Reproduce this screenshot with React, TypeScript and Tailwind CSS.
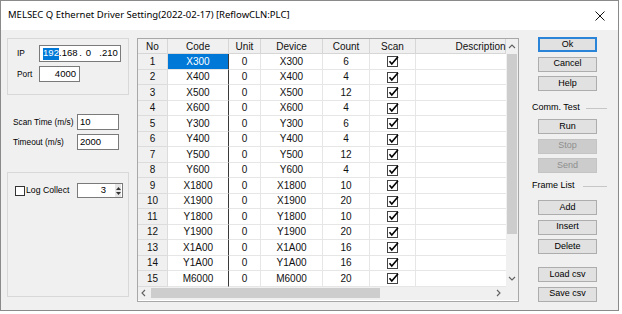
import React from "react";

const rows: [number, string, number, string, number][] = [
  [1, "X300", 0, "X300", 6],
  [2, "X400", 0, "X400", 4],
  [3, "X500", 0, "X500", 12],
  [4, "X600", 0, "X600", 4],
  [5, "Y300", 0, "Y300", 6],
  [6, "Y400", 0, "Y400", 4],
  [7, "Y500", 0, "Y500", 12],
  [8, "Y600", 0, "Y600", 4],
  [9, "X1800", 0, "X1800", 10],
  [10, "X1900", 0, "X1900", 20],
  [11, "Y1800", 0, "Y1800", 10],
  [12, "Y1900", 0, "Y1900", 20],
  [13, "X1A00", 0, "X1A00", 16],
  [14, "Y1A00", 0, "Y1A00", 16],
  [15, "M6000", 0, "M6000", 20],
];

function Check() {
  return (
    <svg width="12" height="12" viewBox="0 0 12 12">
      <rect x="0.5" y="1.5" width="10" height="10" fill="white" stroke="#444" />
      <path d="M2.5 6.2 L4.8 9 L11 1.8" stroke="#000" strokeWidth="1.6" fill="none" />
    </svg>
  );
}

function Btn({ label, primary, disabled }: { label: string; primary?: boolean; disabled?: boolean }) {
  if (disabled) {
    return (
      <div className="w-[59px] h-[15px] ml-[6px] bg-[#cccccc] border border-[#c4c4c4] text-[#8e8e8e] text-[9px] flex items-center justify-center">
        {label}
      </div>
    );
  }
  if (primary) {
    return (
      <div className="w-[59px] h-[15px] ml-[6px] bg-[#e1e1e1] border-2 border-[#2a84d8] text-black text-[9px] flex items-center justify-center">
        {label}
      </div>
    );
  }
  return (
    <div className="w-[59px] h-[15px] ml-[6px] bg-[#e1e1e1] border border-[#adadad] text-black text-[9px] flex items-center justify-center">
      {label}
    </div>
  );
}

function Chevron({ dir }: { dir: "up" | "down" | "left" | "right" }) {
  const d =
    dir === "up"
      ? "M1 5 L4 2 L7 5"
      : dir === "down"
      ? "M1 2 L4 5 L7 2"
      : dir === "left"
      ? "M5 1 L2 4 L5 7"
      : "M2 1 L5 4 L2 7";
  return (
    <svg width="8" height="8" viewBox="0 0 8 8">
      <path d={d} stroke="#606060" strokeWidth="1.1" fill="none" />
    </svg>
  );
}

export default function App() {
  const cols = ["w-[30px]", "w-[61px]", "w-[32px]", "w-[62px]", "w-[47px]", "w-[46px]", "w-[90px]"];
  return (
    <div className="w-[622px] h-[314px] bg-white font-['Liberation_Sans',Arial,sans-serif] text-black">
      <div className="w-[619px] h-[311px] border border-[#8a8a8a] bg-[#f0f0f0] flex flex-col">
        {/* Title bar */}
        <div className="h-[29px] bg-white flex items-center justify-between pl-[7px] pr-[13px]">
          <span className="text-[9.5px] font-['Noto_Sans',sans-serif] text-black">
            MELSEC Q Ethernet Driver Setting(2022-02-17) [ReflowCLN:PLC]
          </span>
          <svg width="10" height="10" viewBox="0 0 10 10">
            <path d="M0.5 0.5 L9.5 9.5 M9.5 0.5 L0.5 9.5" stroke="#111" strokeWidth="1" />
          </svg>
        </div>

        {/* Body */}
        <div className="flex pt-[7px] pl-[6px]">
          {/* Left column */}
          <div className="w-[122px] flex flex-col mt-[1px] text-[8.3px] whitespace-nowrap">
            <div className="border border-[#d8d8d8] pt-[6px] pb-[12px] pl-[9px]">
              <div className="flex items-center h-[17px]">
                <span className="w-[22px]">IP</span>
                <div className="w-[82px] h-[17px] bg-white border border-[#7a7a7a] flex items-center text-[9.5px]">
                  <span className="w-[3px]" />
                  <span className="bg-[#0078d7] text-white h-[12px] w-[16px] flex items-center justify-center">192</span>
                  <span className="w-[18px] text-right">.168</span>
                  <span className="w-[5px] text-right">.</span>
                  <span className="w-[13px] text-center">0</span>
                  <span className="w-[7px] text-right">.</span>
                  <span className="w-[15px] text-right">210</span>
                </div>
              </div>
              <div className="flex items-center h-[16px] mt-[4px]">
                <span className="w-[22px]">Port</span>
                <div className="w-[41px] h-[16px] bg-white border border-[#7a7a7a] flex items-center justify-end pr-[3px] text-[9.5px]">
                  4000
                </div>
              </div>
            </div>

            <div className="flex items-center h-[16px] mt-[19px] pl-[6px]">
              <span className="w-[64px]">Scan Time (m/s)</span>
              <div className="w-[42px] h-[16px] bg-white border border-[#7a7a7a] flex items-center pl-[2px] text-[9.5px]">10</div>
            </div>
            <div className="flex items-center h-[16px] mt-[4px] pl-[6px]">
              <span className="w-[64px]">Timeout (m/s)</span>
              <div className="w-[42px] h-[16px] bg-white border border-[#7a7a7a] flex items-center pl-[2px] text-[9.5px]">2000</div>
            </div>

            <div className="border border-[#d8d8d8] mt-[22px] h-[125px] pt-[10px] pl-[7px]">
              <div className="flex items-center h-[15px]">
                <div className="w-[10px] h-[10px] bg-white border border-[#333]" />
                <span className="w-[52px] pl-[1px] text-[8.7px]">Log Collect</span>
                <div className="w-[46px] h-[15px] bg-white border border-[#7a7a7a] flex items-center text-[9.5px]">
                  <span className="flex-1 text-right pr-[9px]">3</span>
                  <div className="w-[6px] h-[13px] bg-[#e5e5e5] flex flex-col items-center justify-center gap-[2px] mr-[1px]">
                    <svg width="5" height="3" viewBox="0 0 5 3"><path d="M0 3 L2.5 0 L5 3Z" fill="#333" /></svg>
                    <svg width="5" height="3" viewBox="0 0 5 3"><path d="M0 0 L2.5 3 L5 0Z" fill="#333" /></svg>
                  </div>
                </div>
              </div>
            </div>
          </div>

          {/* Table */}
          <div className="ml-[8px] mt-[1px] w-[382px] border border-[#a8a8a8] bg-white flex flex-col text-[10px] text-[#111]">
            <div className="flex">
              <div className="w-[368px] flex flex-col">
                <div className="flex h-[15px]">
                  {["No", "Code", "Unit", "Device", "Count", "Scan", "Description"].map((h, i) => (
                    <div
                      key={h}
                      className={`${cols[i]} h-full bg-[#f0f0f0] border-r border-b border-[#d6d6d6] flex items-center justify-center ${i === 6 ? "pl-[40px]" : ""}`}
                    >
                      {h}
                    </div>
                  ))}
                </div>
                {rows.map((r, ri) => (
                  <div key={r[0]} className="flex h-[15.5px]">
                    <div className={`${cols[0]} h-full bg-[#f0f0f0] border-r border-b border-[#dcdcdc] flex items-center justify-center`}>
                      {r[0]}
                    </div>
                    <div
                      className={`${cols[1]} h-full border-r border-r-[#3a3a3a] border-b border-b-[#e6e6e6] flex items-center justify-center ${
                        ri === 0 ? "bg-[#0078d7] text-white" : ""
                      }`}
                    >
                      {r[1]}
                    </div>
                    <div className={`${cols[2]} h-full border-r border-b border-[#e6e6e6] flex items-center justify-center`}>{r[2]}</div>
                    <div className={`${cols[3]} h-full border-r border-b border-[#e6e6e6] flex items-center justify-center`}>{r[3]}</div>
                    <div className={`${cols[4]} h-full border-r border-b border-[#e6e6e6] flex items-center justify-center`}>{r[4]}</div>
                    <div className={`${cols[5]} h-full border-r border-b border-[#e6e6e6] flex items-center justify-center`}>
                      <Check />
                    </div>
                    <div className={`${cols[6]} h-full border-b border-[#e6e6e6]`} />
                  </div>
                ))}
              </div>
              {/* vertical scrollbar */}
              <div className="w-[12px] bg-[#f0f0f0] flex flex-col items-center">
                <div className="h-[15px] flex items-center justify-center">
                  <Chevron dir="up" />
                </div>
                <div className="w-[10px] h-[180px] bg-[#cdcdcd]" />
                <div className="flex-1" />
                <div className="h-[15px] flex items-center justify-center">
                  <Chevron dir="down" />
                </div>
              </div>
            </div>
            {/* horizontal scrollbar */}
            <div className="flex h-[13px]">
              <div className="w-[368px] bg-[#f0f0f0] flex items-center">
                <div className="w-[12px] flex items-center justify-center">
                  <Chevron dir="left" />
                </div>
                <div className="ml-[1px] w-[229px] h-[10px] bg-[#cdcdcd]" />
                <div className="flex-1" />
                <div className="w-[14px] flex items-center justify-center">
                  <Chevron dir="right" />
                </div>
              </div>
              <div className="w-[12px] bg-[#f0f0f0]" />
            </div>
          </div>

          {/* Right column */}
          <div className="ml-[13px] w-[75px] flex flex-col text-[9px] whitespace-nowrap">
            <Btn label="Ok" primary />
            <div className="mt-[4.5px]"><Btn label="Cancel" /></div>
            <div className="mt-[4.5px]"><Btn label="Help" /></div>
            <div className="flex items-center h-[12px] mt-[11px]">
              <span>Comm. Test</span>
              <div className="ml-[6px] flex-1 h-px bg-[#c6c6c6]" />
            </div>
            <div className="mt-[5px]"><Btn label="Run" /></div>
            <div className="mt-[4.5px]"><Btn label="Stop" disabled /></div>
            <div className="mt-[4.5px]"><Btn label="Send" disabled /></div>
            <div className="flex items-center h-[12px] mt-[7px]">
              <span>Frame List</span>
              <div className="ml-[8px] flex-1 h-px bg-[#c6c6c6]" />
            </div>
            <div className="mt-[8px]"><Btn label="Add" /></div>
            <div className="mt-[4.5px]"><Btn label="Insert" /></div>
            <div className="mt-[4.5px]"><Btn label="Delete" /></div>
            <div className="mt-[13px]"><Btn label="Load csv" /></div>
            <div className="mt-[4.5px]"><Btn label="Save csv" /></div>
          </div>
        </div>
      </div>
    </div>
  );
}
